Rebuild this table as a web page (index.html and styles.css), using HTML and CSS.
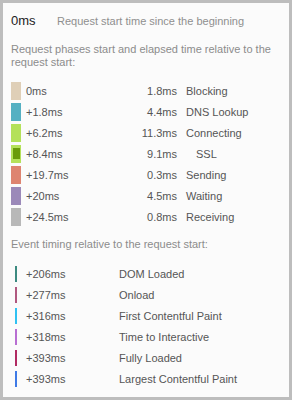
FILE: index.html
```html
<!DOCTYPE html>
<html>
<head>
<meta charset="utf-8">
<link rel="stylesheet" href="styles.css">
</head>
<body>
<div class="panel">
  <div class="summary">
    <span class="summary-value">0ms</span>
    <span class="summary-label">Request start time since the beginning</span>
  </div>
  <p class="heading">Request phases start and elapsed time relative to the request start:</p>
  <div class="phases">
    <div class="phase"><span class="swatch blocked"></span><span class="start">0ms</span><span class="dur">1.8ms</span><span class="name">Blocking</span></div>
    <div class="phase"><span class="swatch dns"></span><span class="start">+1.8ms</span><span class="dur">4.4ms</span><span class="name">DNS Lookup</span></div>
    <div class="phase"><span class="swatch connect"></span><span class="start">+6.2ms</span><span class="dur">11.3ms</span><span class="name">Connecting</span></div>
    <div class="phase"><span class="swatch connect"><span class="ssl-inner"></span></span><span class="start">+8.4ms</span><span class="dur">9.1ms</span><span class="name sub">SSL</span></div>
    <div class="phase"><span class="swatch send"></span><span class="start">+19.7ms</span><span class="dur">0.3ms</span><span class="name">Sending</span></div>
    <div class="phase"><span class="swatch wait"></span><span class="start">+20ms</span><span class="dur">4.5ms</span><span class="name">Waiting</span></div>
    <div class="phase"><span class="swatch receive"></span><span class="start">+24.5ms</span><span class="dur">0.8ms</span><span class="name">Receiving</span></div>
  </div>
  <p class="heading events-heading">Event timing relative to the request start:</p>
  <div class="events">
    <div class="event"><span class="bar dom"></span><span class="ev-start">+206ms</span><span class="ev-name">DOM Loaded</span></div>
    <div class="event"><span class="bar load"></span><span class="ev-start">+277ms</span><span class="ev-name">Onload</span></div>
    <div class="event"><span class="bar fcp"></span><span class="ev-start">+316ms</span><span class="ev-name">First Contentful Paint</span></div>
    <div class="event"><span class="bar tti"></span><span class="ev-start">+318ms</span><span class="ev-name">Time to Interactive</span></div>
    <div class="event"><span class="bar full"></span><span class="ev-start">+393ms</span><span class="ev-name">Fully Loaded</span></div>
    <div class="event"><span class="bar lcp"></span><span class="ev-start">+393ms</span><span class="ev-name">Largest Contentful Paint</span></div>
  </div>
</div>
</body>
</html>
```

FILE: styles.css
```css
html, body {
  margin: 0;
  padding: 0;
  background: #bdbdbd;
}

body {
  font-family: "Liberation Sans", Arial, sans-serif;
  font-size: 11px;
  color: #555;
}

.panel {
  box-sizing: border-box;
  width: 292px;
  height: 400px;
  border: 3px solid #bdbdbd;
  background: #fbfbfb;
  padding: 10px 8px 0 8px;
}

.summary {
  display: flex;
  align-items: baseline;
}

.summary-value {
  font-size: 13px;
  color: #222;
  width: 46px;
}

.summary-label {
  color: #8f8f8f;
}

.heading {
  margin: 15px 0 0 0;
  color: #8c8c8c;
  line-height: 12.5px;
}

.phases {
  margin-top: 14px;
  display: flex;
  flex-direction: column;
  gap: 3px;
}

.phase {
  display: flex;
  align-items: center;
  height: 18px;
}

.swatch {
  display: block;
  width: 10px;
  height: 18px;
  margin-right: 5px;
  flex: none;
}

.blocked { background: #dfcfb7; }
.dns { background: #54b0c2; }
.connect { background: #b4e15a; }
.send { background: #de8470; }
.wait { background: #9b89b9; }
.receive { background: #b8b8b8; }

.ssl-inner {
  display: block;
  width: 7px;
  height: 11px;
  margin: 3px 0 0 2px;
  background: #6a9b0a;
}

.start {
  width: 90px;
}

.dur {
  width: 61px;
  text-align: right;
}

.name {
  margin-left: 9px;
}

.name.sub {
  padding-left: 10px;
}

.events-heading {
  margin-top: 12px;
}

.events {
  margin-top: 15px;
  display: flex;
  flex-direction: column;
  gap: 5px;
}

.event {
  display: flex;
  align-items: center;
  height: 16px;
}

.bar {
  display: block;
  width: 2px;
  height: 16px;
  margin-left: 4px;
  margin-right: 9px;
  flex: none;
}

.dom { background: #3c8a80; }
.load { background: #b0587f; }
.fcp { background: #2fc1f2; }
.tti { background: #b86ed2; }
.full { background: #b12a62; }
.lcp { background: #3e7ae6; }

.ev-start {
  width: 93px;
}
```
